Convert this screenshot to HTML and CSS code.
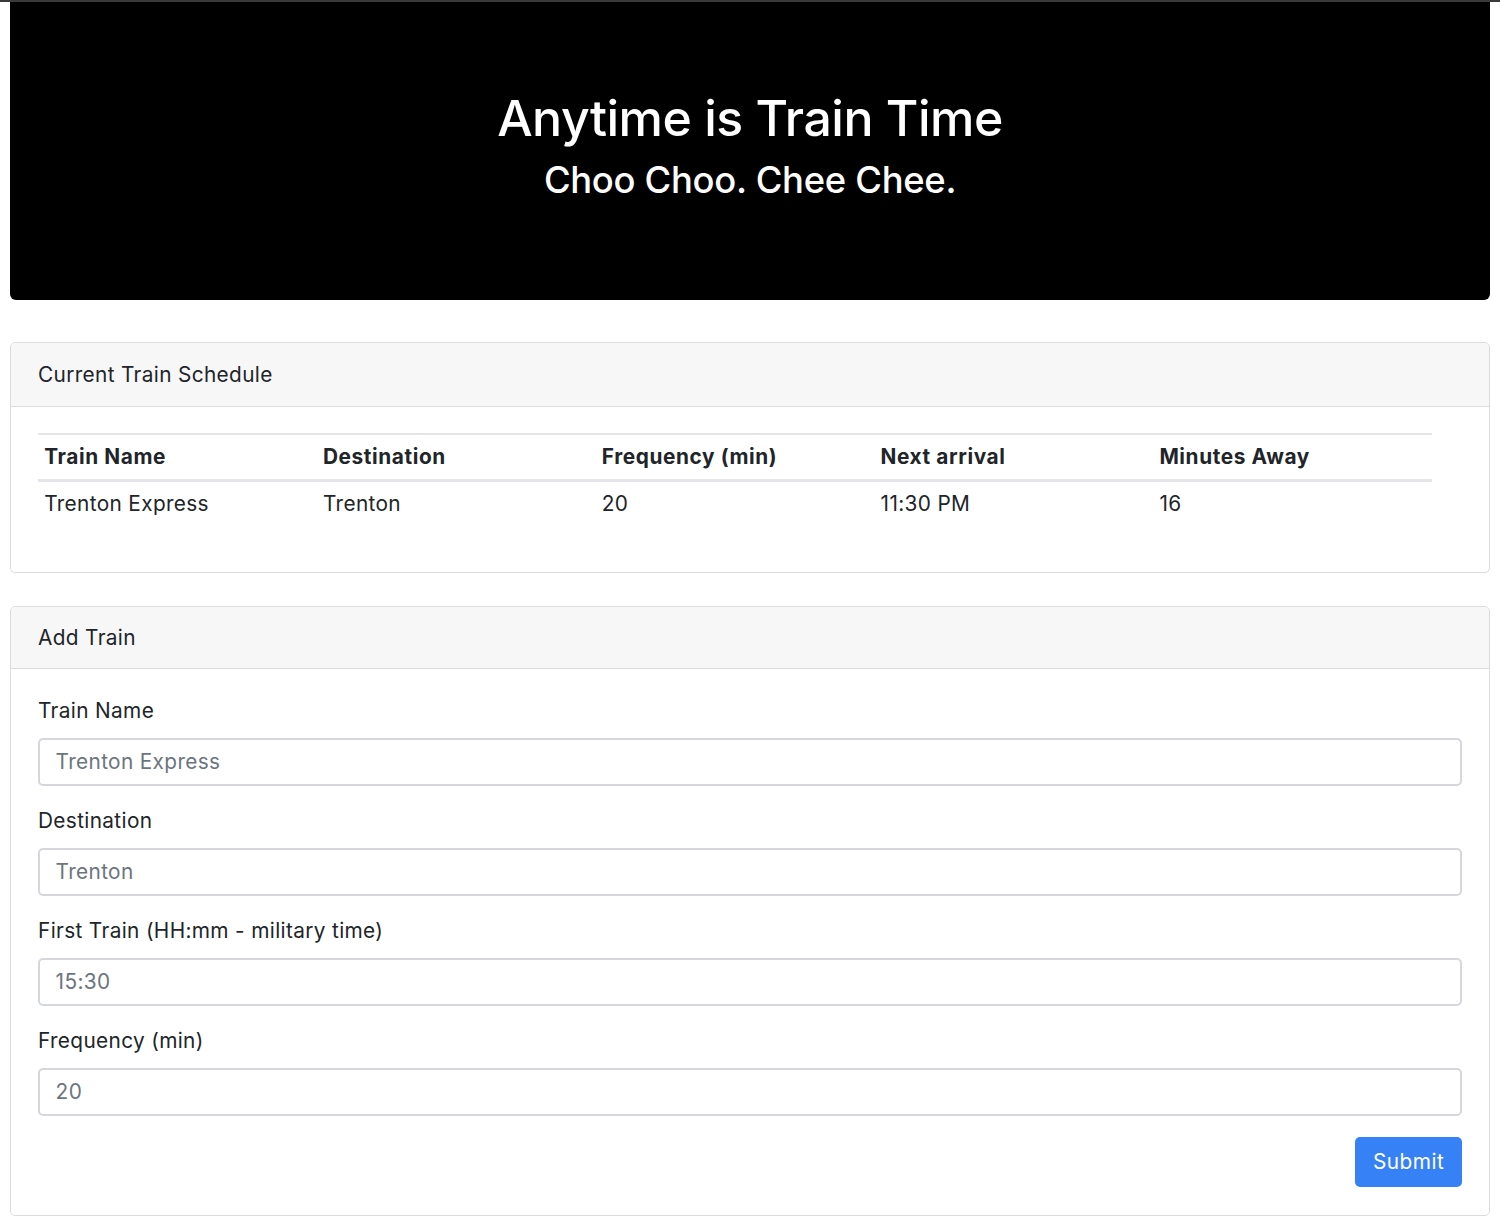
FILE: index.html
```html
<!DOCTYPE html>
<html lang="en">
<head>
<meta charset="utf-8">
<title>Train Scheduler</title>
<link rel="stylesheet" href="styles.css">
</head>
<body>
<div class="page">
  <header class="jumbotron">
    <h1 class="title">Anytime is Train Time</h1>
    <h3 class="subtitle">Choo Choo. Chee Chee.</h3>
  </header>

  <section class="card schedule-card">
    <div class="card-header">Current Train Schedule</div>
    <div class="card-body">
      <table class="table">
        <thead>
          <tr>
            <th>Train Name</th>
            <th>Destination</th>
            <th>Frequency (min)</th>
            <th>Next arrival</th>
            <th>Minutes Away</th>
          </tr>
        </thead>
        <tbody>
          <tr>
            <td>Trenton Express</td>
            <td>Trenton</td>
            <td>20</td>
            <td>11:30 PM</td>
            <td>16</td>
          </tr>
        </tbody>
      </table>
    </div>
  </section>

  <section class="card add-card">
    <div class="card-header">Add Train</div>
    <div class="card-body">
      <form class="form">
        <div class="form-group">
          <label class="label" for="train-name">Train Name</label>
          <input class="input" id="train-name" type="text" placeholder="Trenton Express">
        </div>
        <div class="form-group">
          <label class="label" for="destination">Destination</label>
          <input class="input" id="destination" type="text" placeholder="Trenton">
        </div>
        <div class="form-group">
          <label class="label" for="first-train">First Train (HH:mm - military time)</label>
          <input class="input" id="first-train" type="text" placeholder="15:30">
        </div>
        <div class="form-group">
          <label class="label" for="frequency">Frequency (min)</label>
          <input class="input" id="frequency" type="text" placeholder="20">
        </div>
        <div class="actions">
          <button class="btn-primary" type="button">Submit</button>
        </div>
      </form>
    </div>
  </section>
</div>
</body>
</html>
```

FILE: styles.css
```css
* {
  box-sizing: border-box;
}

html, body {
  margin: 0;
  padding: 0;
  background: #ffffff;
}

body {
  font-family: Inter, "Liberation Sans", Arial, sans-serif;
  font-size: 20.8px;
  line-height: 1.5;
  letter-spacing: 0.35px;
  color: #212529;
  border-top: 2px solid #3a3a3a;
}

.page {
  padding: 0 10px;
}

.jumbotron {
  background: #000000;
  color: #ffffff;
  text-align: center;
  padding: 85px 41.6px 0;
  height: 298px;
  border-radius: 0 0 6px 6px;
  margin: 0 0 42px;
}

.title {
  margin: 0 0 10px;
  font-size: 50px;
  font-weight: 500;
  line-height: 62.4px;
  letter-spacing: -0.5px;
}

.subtitle {
  margin: 0;
  font-size: 36.4px;
  font-weight: 500;
  line-height: 43.7px;
  letter-spacing: -0.3px;
}

.card {
  border: 1px solid #dcdcdc;
  border-radius: 5px;
  background: #ffffff;
  overflow: hidden;
}

.schedule-card {
  margin-bottom: 33px;
}

.card-header {
  background: #f7f7f7;
  border-bottom: 1px solid #dcdcdc;
  padding: 15.6px 27px;
  height: 64px;
  line-height: 31.2px;
  font-size: 20.8px;
}

.add-card .card-header {
  height: 62px;
  padding-top: 14.6px;
}

.card-body {
  padding: 26px 27px;
}

.add-card .card-body {
  padding-top: 26px;
  padding-bottom: 28px;
}

.table {
  width: calc(100% - 30px);
  border-collapse: collapse;
  table-layout: fixed;
  margin-bottom: 20.8px;
}

.table th,
.table td {
  text-align: left;
  padding: 6.2px;
  line-height: 31.2px;
  border-top: 2px solid #e3e5e8;
  vertical-align: top;
}

.table th {
  font-weight: 700;
  letter-spacing: 0.6px;
}

.table thead th {
  border-bottom: 3px solid #e3e5e8;
}

.table tbody td {
  border-top: none;
}

.form-group {
  margin-bottom: 19px;
}

.label {
  display: block;
  margin-bottom: 12px;
  line-height: 31px;
}

.input {
  display: block;
  width: 100%;
  height: 48px;
  padding: 7.8px 15.6px;
  font-family: inherit;
  font-size: 20.8px;
  line-height: 31.2px;
  letter-spacing: 0.35px;
  color: #495057;
  background: #ffffff;
  border: 2px solid #d4d7db;
  border-radius: 5px;
}

.input::placeholder {
  color: #6c757d;
  opacity: 1;
}

.actions {
  display: flex;
  justify-content: flex-end;
  padding-top: 2px;
}

.btn-primary {
  font-family: inherit;
  font-size: 20.8px;
  line-height: 31.2px;
  letter-spacing: 0.5px;
  padding: 8.8px 17.6px;
  height: 50px;
  color: #ffffff;
  background: #3781f6;
  border: none;
  border-radius: 5px;
  cursor: pointer;
}
```
